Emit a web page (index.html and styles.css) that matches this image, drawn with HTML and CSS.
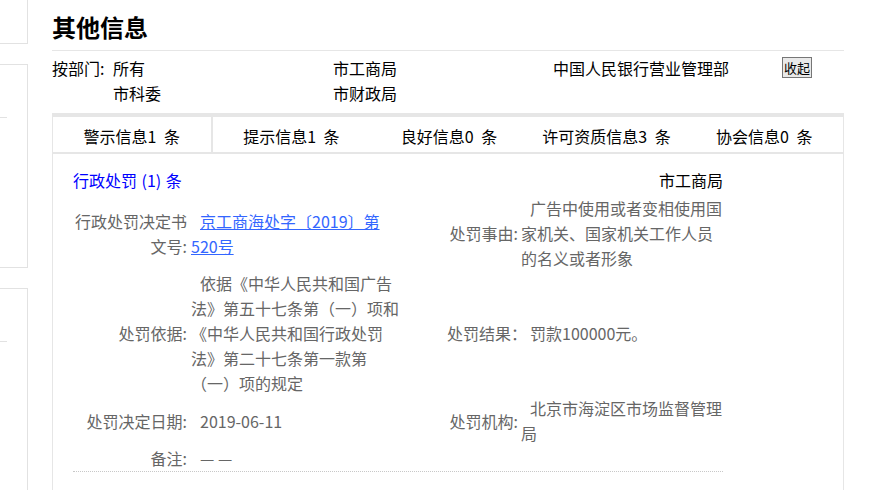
FILE: index.html
```html
<!DOCTYPE html>
<html lang="zh-CN">
<head>
    <meta charset="UTF-8">
    <meta name="viewport" content="width=device-width, initial-scale=1.0">
    <title>其他信息</title>
    <link rel="stylesheet" href="styles.css">
</head>
<body>
    <div class="page">
        <aside class="side">
            <div class="side-box side-first"></div>
            <div class="side-box side-mid"><div class="side-mark"></div></div>
            <div class="side-box side-last"><div class="side-mark"></div></div>
        </aside>

        <main class="main">
            <h1 class="title">其他信息</h1>

            <div class="dept">
                <span class="dept-label">按部门:</span>
                <span class="dept-item">所有</span>
                <span class="dept-item">市工商局</span>
                <span class="dept-item">中国人民银行营业管理部</span>
                <button class="fold">收起</button>
                <span class="dept-item dept-row2">市科委</span>
                <span class="dept-item">市财政局</span>
            </div>

            <ul class="tabs">
                <li class="tab tab-active">警示信息1 条</li>
                <li class="tab">提示信息1 条</li>
                <li class="tab">良好信息0 条</li>
                <li class="tab">许可资质信息3 条</li>
                <li class="tab">协会信息0 条</li>
            </ul>

            <div class="panel">
                <div class="panel-head">
                    <span class="panel-title">行政处罚 (1) 条</span>
                    <span class="panel-org">市工商局</span>
                </div>

                <div class="record">
                    <div class="lbl">行政处罚决定书 文号:</div>
                    <div class="val"><a href="#" class="doc-link">京工商海处字〔2019〕第520号</a></div>
                    <div class="lbl lbl-right">处罚事由:</div>
                    <div class="val">广告中使用或者变相使用国家机关、国家机关工作人员的名义或者形象</div>

                    <div class="lbl">处罚依据:</div>
                    <div class="val">依据《中华人民共和国广告法》第五十七条第（一）项和《中华人民共和国行政处罚法》第二十七条第一款第（一）项的规定</div>
                    <div class="lbl lbl-right lbl-wide">处罚结果：</div>
                    <div class="val">罚款100000元。</div>

                    <div class="lbl">处罚决定日期:</div>
                    <div class="val">2019-06-11</div>
                    <div class="lbl lbl-right">处罚机构:</div>
                    <div class="val">北京市海淀区市场监督管理局</div>

                    <div class="lbl">备注:</div>
                    <div class="val">— —</div>
                    <div class="lbl"></div>
                    <div class="val"></div>
                </div>
            </div>
        </main>
    </div>
</body>
</html>
```

FILE: styles.css
```css
body {
    margin: 0;
    font-family: "Noto Sans CJK SC", "Noto Sans", sans-serif;
    font-size: 16px;
    color: #000;
    background: #fff;
    text-spacing-trim: space-all;
    overflow: hidden;
}

.page {
    display: flex;
    align-items: flex-start;
}

/* bout de colonne gauche */
.side {
    width: 28px;
    flex-shrink: 0;
}

.side-box {
    box-sizing: border-box;
    border-right: 1px solid #e2e2e2;
}

.side-first {
    height: 44px;
    border-bottom: 1px solid #e2e2e2;
}

.side-mid {
    height: 204px;
    margin-top: 20px;
    border-top: 1px solid #e2e2e2;
    border-bottom: 1px solid #e2e2e2;
}

.side-last {
    height: 240px;
    margin-top: 20px;
    border-top: 1px solid #e2e2e2;
}

.side-mark {
    width: 7px;
    margin-top: 52px;
    border-top: 1px solid #e2e2e2;
}

.main {
    width: 792px;
    margin-left: 24px;
}

.title {
    margin: 0;
    padding: 10px 0 6px;
    font-size: 24px;
    line-height: 34px;
    font-weight: bold;
    border-bottom: 1px solid #e6e6e6;
}

.dept {
    display: grid;
    grid-template-columns: 61px 220px 220px 220px auto;
    grid-auto-rows: 25px;
    line-height: 25px;
    padding: 5px 0 7px;
}

.dept-label {
    word-spacing: 2px;
}

.dept-row2 {
    grid-column: 2;
}

.fold {
    align-self: start;
    justify-self: start;
    margin: 1px 0 0 9px;
    padding: 1px 1px;
    font-family: "Noto Sans CJK SC", sans-serif;
    font-size: 13px;
    line-height: 17px;
    color: #000;
    background: #e9e9e9;
    border: 1px solid #767676;
    border-radius: 0;
}

.tabs {
    display: flex;
    margin: 0;
    padding: 0;
    list-style: none;
    border: 1px solid #e6e6e6;
    border-top-width: 4px;
    border-bottom-width: 2px;
}

.tab {
    flex: 1;
    height: 31px;
    padding-top: 4px;
    line-height: 30px;
    text-align: center;
    word-spacing: 4px;
}

.tab-active {
    border-right: 2px solid #e6e6e6;
}

.panel {
    height: 340px;
    padding: 14px 20px 0;
    border-left: 1px solid #e6e6e6;
    border-right: 1px solid #e6e6e6;
}

.panel-head {
    display: flex;
    justify-content: space-between;
    width: 650px;
    line-height: 25px;
    margin-bottom: 3px;
}

.panel-title {
    color: #00f;
    word-spacing: 1px;
}

.panel-org {
    color: #000;
}

.record {
    display: grid;
    grid-template-columns: 118px 211px 119px 202px;
    align-items: center;
    width: 650px;
    line-height: 25px;
    color: #666;
    border-bottom: 1px dotted #c8c8c8;
}

.lbl {
    text-align: right;
    padding-right: 4px;
}

.lbl-right {
    padding-right: 3px;
}

.lbl-wide {
    padding-right: 0;
    margin-right: -6px;
}

.val {
    text-indent: 9px;
}

.doc-link {
    color: #36f;
    text-decoration: underline;
}
```
